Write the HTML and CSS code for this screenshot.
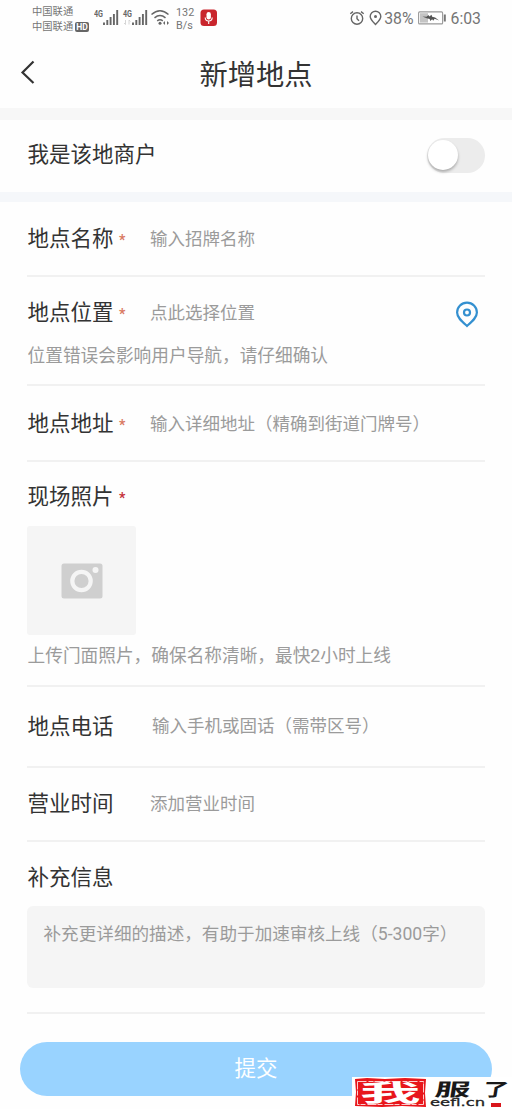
FILE: index.html
```html
<!DOCTYPE html>
<html lang="zh-CN">
<head>
<meta charset="utf-8">
<title>新增地点</title>
<link rel="stylesheet" href="styles.css">
</head>
<body>
<div class="app">
  <header class="status">
    <div class="carriers">
      <span>中国联通</span>
      <span class="carrier-line">中国联通<b class="hd">HD</b></span>
    </div>
    <svg class="signals" width="78" height="22" viewBox="0 0 78 22">
      <g class="tiny"><text x="0" y="12" textLength="9" lengthAdjust="spacingAndGlyphs">4G</text><text x="29" y="12" textLength="9" lengthAdjust="spacingAndGlyphs">4G</text></g>
      <path class="bars" d="M10 20v-2.500M13.300 20v-5M16.600 20v-8M19.900 20v-11M23.200 20V5M39 20v-2.500M42.300 20v-5M45.600 20v-8M48.900 20v-11M52.200 20V5"/>
      <path class="faint" d="M31.500 15v4.500M30 18l1.500 1.500M35 19.500V15l1.500 1.500"/>
      <path class="wifi" d="M57.500 9.500q8.500-7.500 17 0M60.500 12.800q5.500-4.500 11 0M63.200 15.800q2.800-2 5.600 0"/>
      <circle cx="66" cy="18.300" r="1.500"/><path d="M69 18l2-2v4zM75 18l-2-2v4z"/>
    </svg>
    <div class="speed"><span>132</span><span>B/s</span></div>
    <svg class="mic" width="18" height="18" viewBox="0 0 18 18">
      <rect x=".5" y=".5" width="16.500" height="16.500" rx="3.500" fill="#c9252c"/>
      <rect x="6.500" y="3" width="4.400" height="7.500" rx="2.200" fill="#fff"/>
      <path d="M5.200 8.500q0 3.500 3.500 3.500t3.500-3.500M8.700 12v3" fill="none" stroke="#fff" stroke-width="1.100"/>
    </svg>
    <div class="status-right">
      <svg class="line" width="16" height="16" viewBox="0 0 16 16">
        <circle cx="8" cy="8.500" r="5.700"/><path d="M8 5.500v3.200l2 2M1.300 3.800 4 1.600M14.700 3.800 12 1.600"/>
      </svg>
      <svg class="line pin" width="13" height="16" viewBox="0 0 13 16">
        <path d="M6.500 14.500C4 12 1.200 9.500 1.200 6.600a5.300 5.300 0 0 1 10.600 0c0 2.900-2.800 5.400-5.300 7.900z"/><circle class="dot" cx="6.500" cy="6.500" r="1.500"/>
      </svg>
      <span class="percent">38%</span>
      <svg class="battery" width="29" height="14" viewBox="0 0 29 14">
        <rect x=".6" y=".9" width="24" height="12" rx="1" fill="#fff" stroke="#999" stroke-width="1.100"/>
        <path d="M2 2.200h8v9.400H2z" fill="#c4c4c4"/>
        <path d="M4.500 5.500l4 .2 2-1.700.8 1.500 2.300-1.700.5 2 3 .8 4 3-4.500-1.800-1.400 2-1-1.600-2 1.700-.5-2-3-.6z" fill="#555"/>
        <path d="M26.800 3.500v7" stroke="#777" stroke-width="2"/>
      </svg>
      <span class="clock">6:03</span>
    </div>
  </header>

  <nav class="titlebar">
    <svg class="back" width="16" height="26" viewBox="0 0 16 26"><path d="M13.500 2.500 2.500 13.500l11 10.500"/></svg>
    <h1>新增地点</h1>
  </nav>

  <section class="merchant">
    <span class="label">我是该地商户</span>
    <span class="switch"><i class="knob"></i></span>
  </section>

  <main class="form">
    <div class="field name">
      <div class="row"><span class="label">地点名称</span><i class="req">*</i><span class="hint">输入招牌名称</span></div>
    </div>
    <div class="field place">
      <div class="row"><span class="label">地点位置</span><i class="req">*</i><span class="hint">点此选择位置</span>
        <svg class="locate" width="24" height="27" viewBox="0 0 24 27"><path d="M12 25C7 20.500 2.100 16.500 2.100 11.500a9.900 9.900 0 0 1 19.800 0C21.900 16.500 17 20.500 12 25z"/><circle cx="12" cy="11.500" r="3"/></svg>
      </div>
      <p class="note">位置错误会影响用户导航，请仔细确认</p>
    </div>
    <div class="field address">
      <div class="row"><span class="label">地点地址</span><i class="req">*</i><span class="hint">输入详细地址（精确到街道门牌号）</span></div>
    </div>
    <div class="field photo">
      <div class="row"><span class="label">现场照片</span><i class="req strong">*</i></div>
      <div class="upload">
        <svg width="42" height="36" viewBox="0 0 42 36"><rect x=".5" y=".5" width="41" height="35" rx="2.500" fill="#cfcfcf"/><circle cx="20.500" cy="18" r="9.200" fill="#cfcfcf" stroke="#f5f5f5" stroke-width="4.200"/><circle cx="34.500" cy="7" r="3" fill="#f5f5f5"/></svg>
      </div>
      <p class="note">上传门面照片，确保名称清晰，最快2小时上线</p>
    </div>
    <div class="field phone">
      <div class="row"><span class="label">地点电话</span><span class="hint">输入手机或固话（需带区号）</span></div>
    </div>
    <div class="field hours">
      <div class="row"><span class="label">营业时间</span><span class="hint">添加营业时间</span></div>
    </div>
    <div class="field extra">
      <div class="row"><span class="label">补充信息</span></div>
      <div class="memo">补充更详细的描述，有助于加速审核上线（5-300字）</div>
    </div>
  </main>
  <div class="submit">提交</div>

  <div class="watermark">
    <svg width="160" height="32" viewBox="0 0 160 32">
      <rect width="160" height="32" fill="#fff"/>
      <path d="M3 2l12-1 18 1 20-1 21 1-1 14 1 14-24-1-20 1-27-1 1-14z" fill="#e8161b"/>
      <path d="M5.500 4.500h66v23h-66z" fill="none" stroke="#fff" stroke-width=".8" stroke-dasharray="9 2 5 1"/>
      <text class="seal" transform="translate(8 23.800) scale(2.750 1.050)">我</text>
      <text class="brush" transform="translate(82 19) skewX(-9) scale(2.100 1.050)">服</text>
      <text class="brush" transform="translate(130 19) skewX(-9) scale(1.500 1.050)">了</text>
      <text class="domain" x="78" y="29" textLength="55" lengthAdjust="spacingAndGlyphs">eefl.cn</text>
      <path d="M139 26h10v4h-10z" fill="#d9161b"/>
    </svg>
  </div>
</div>
</body>
</html>
```
FILE: styles.css
```css
* { box-sizing: border-box; }
body { margin: 0; background: #fff; font-family: Roboto, "Noto Sans CJK SC", sans-serif; color: #333; }
.app { position: relative; width: 512px; height: 1109px; overflow: hidden; background: #fefefe; }
svg { display: block; flex: none; }
i { font-style: normal; }
h1, p { margin: 0; font-weight: 400; }

.status { display: flex; height: 36px; padding-left: 32px; color: #757575; align-items: flex-start; }
.carriers { display: flex; flex-direction: column; width: 62px; padding-top: 4px; font-size: 10.300px; line-height: 15px; white-space: nowrap; }
.carrier-line { display: flex; align-items: center; }
.hd { margin-left: 2px; padding: 0 1px; border-radius: 2px; background: #666; color: #fff; font-size: 8.500px; line-height: 10px; }
.signals { margin-top: 5px; fill: #666; }
.tiny { font: 700 9px Roboto, sans-serif; }
.bars { stroke: #666; stroke-width: 1.900; }
.faint { fill: none; stroke: #ccc; stroke-width: .8; }
.wifi { fill: none; stroke: #666; stroke-width: 1.500; }
.speed { display: flex; flex-direction: column; width: 28px; padding: 6px 0 0 4px; font-size: 10.800px; line-height: 13px; }
.mic { margin-top: 9px; }
.status-right { display: flex; align-items: center; height: 36px; margin-left: auto; padding-right: 31px; }
.line { fill: none; stroke: #666; stroke-width: 1.400; }
.pin { margin-left: 4px; }
.dot { fill: #666; stroke: none; }
.percent { margin-left: 2px; font-size: 15.800px; }
.battery { margin-left: 4px; }
.clock { margin-left: 4px; font-size: 15.800px; }

.titlebar { display: grid; grid-template-columns: 48px 1fr 48px; height: 72px; align-items: center; }
.back { margin-left: 20px; fill: none; stroke: #333; stroke-width: 2.200; }
.titlebar h1 { font-size: 28.300px; line-height: 40px; text-align: center; color: #333; padding-top: 8px; }

.merchant { display: flex; justify-content: space-between; height: 94px; padding: 0 27px; border-top: 12px solid #f7f7f7; border-bottom: 10px solid #f5f7fa; }
.merchant .label { padding-top: 20px; }
.switch { width: 58px; height: 35px; margin-top: 18px; padding: 2px 1px; border-radius: 18px; background: #ececec; }
.knob { display: block; width: 30px; height: 30px; border-radius: 50%; background: #fff; box-shadow: 0 2px 3px rgba(0, 0, 0, .28); }

.form { padding: 0 27px; }
.field { border-bottom: 2px solid #f1f1f1; }
.row { display: flex; height: 30px; align-items: center; white-space: nowrap; }
.label { width: 87px; padding-left: .6px; font-size: 21.500px; line-height: 30px; white-space: nowrap; }
.req { width: 36px; padding: 2px 0 0 5px; font-size: 14px; font-weight: 700; line-height: 20px; color: #d97862; }
.strong { color: #c5303a; }
.hint, .note, .memo { font-size: 17.500px; line-height: 26px; color: #9b9b9b; }
.note { padding-left: .6px; font-size: 17.680px; white-space: nowrap; }
.locate { margin: 2px 6px 0 auto; fill: none; stroke: #3490d0; stroke-width: 2.200; }
.name { height: 75px; padding-top: 22px; }
.place { height: 109px; padding-top: 21px; }
.place .note { padding-top: 15px; }
.address { height: 76px; padding-top: 23px; }
.photo { height: 225px; padding-top: 20px; }
.upload { display: flex; align-items: center; justify-content: center; width: 109px; height: 109px; margin: 14px 0 8px; border-radius: 3px; background: #f5f5f5; }
.phone { height: 81px; padding-top: 25px; }
.phone .hint { margin-left: 38px; padding-bottom: 3px; }
.hours { height: 74px; padding-top: 21px; }
.hours .hint { margin-left: 36px; padding-bottom: 1px; }
.extra { height: 172px; padding-top: 21px; }
.memo { height: 82px; margin-top: 13px; padding: 15px 16.500px; border-radius: 6px; background: #f5f5f5; font-size: 17.600px; white-space: nowrap; }
.submit { height: 54px; margin: 28px 20px 0; border-radius: 27px; background: #99d3ff; color: #fff; font-size: 21.500px; line-height: 54px; text-align: center; }

.watermark { position: absolute; right: 0; bottom: 0; }
.seal { font: 700 22px "Noto Sans CJK SC", sans-serif; fill: #fff; }
.brush { font: 700 17px "Noto Sans CJK SC", sans-serif; fill: #191919; }
.domain { font: 400 11px "DejaVu Sans", sans-serif; fill: #222; stroke: #222; stroke-width: .3; }
```
